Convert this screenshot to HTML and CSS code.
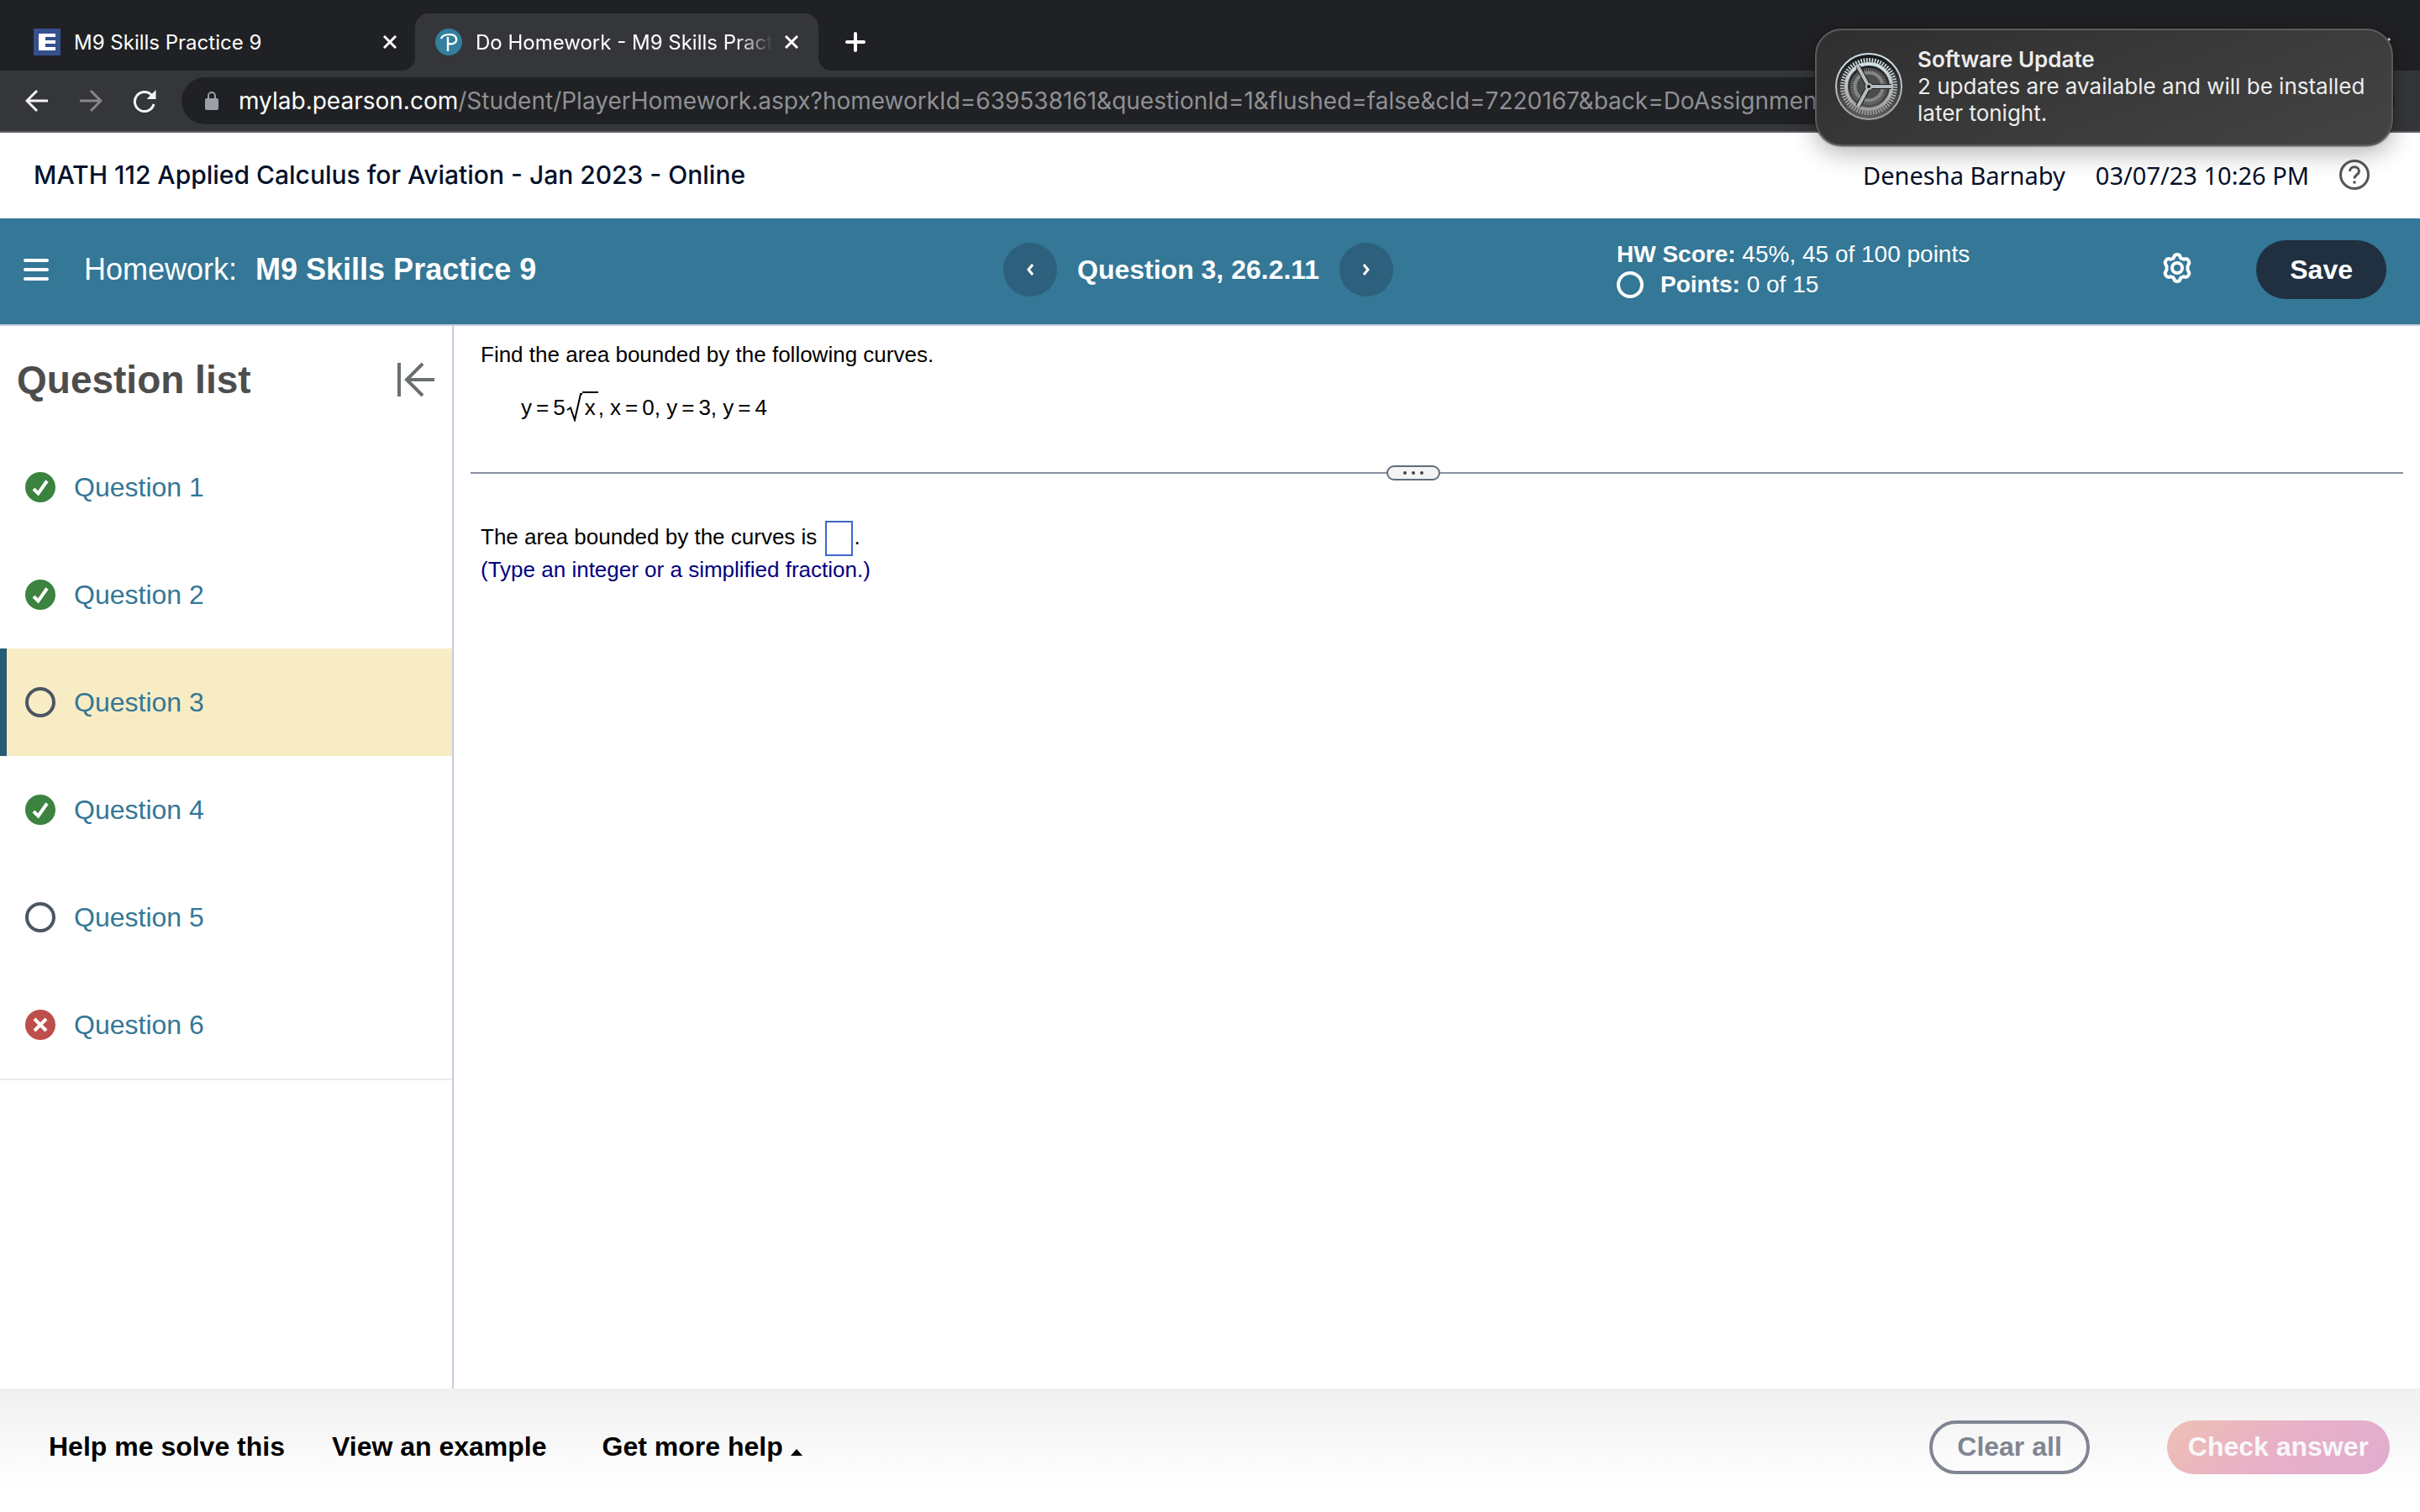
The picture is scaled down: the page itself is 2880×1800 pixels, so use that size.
FILE: index.html
```html
<!DOCTYPE html>
<html lang="en">
<head>
  <meta charset="UTF-8" />
  <title>Do Homework - M9 Skills Practice 9</title>
  <link rel="stylesheet" href="styles.css">
</head>
<body>

  <!-- browser -->
  <div class="tabs">
    <div class="tab">
      <svg class="favicon" viewBox="0 0 32 32"><rect width="32" height="32" fill="#364f8e"/><path d="M6 6h20v4H14v4h12v4H14v4h12v4H6z" fill="#fff"/></svg>
      <span class="tab-title">M9 Skills Practice 9</span>
      <button class="tab-close" aria-label="Close tab"><svg width="16" height="16" viewBox="0 0 16 16"><path d="M1 1l14 14M15 1L1 15"/></svg></button>
    </div>
    <div class="tab active">
      <svg class="favicon" viewBox="0 0 32 32"><circle cx="16" cy="16" r="16" fill="#347e9e"/><path d="M7 12c2-6 17-7 18 0 1 5-4 7-9 6M15 10v17" fill="none" stroke="#fff" stroke-width="2.4"/></svg>
      <span class="tab-title fade">Do Homework - M9 Skills Practice 9</span>
      <button class="tab-close" aria-label="Close tab"><svg width="16" height="16" viewBox="0 0 16 16"><path d="M1 1l14 14M15 1L1 15"/></svg></button>
    </div>
    <button class="new-tab" aria-label="New tab"><svg width="24" height="24" viewBox="0 0 24 24"><path d="M12 2v20M2 12h20"/></svg></button>
    <button class="tab-search" aria-label="Search tabs"><svg width="24" height="16" viewBox="0 0 24 16"><path d="M2 2l10 10L22 2"/></svg></button>
  </div>

  <div class="toolbar">
    <button class="nav" aria-label="Back"><svg width="28" height="28" viewBox="0 0 28 28"><path d="M27 14H3M14 2L2 14l12 12"/></svg></button>
    <button class="nav off" aria-label="Forward"><svg width="28" height="28" viewBox="0 0 28 28"><path d="M1 14h24M14 2l12 12-12 12"/></svg></button>
    <button class="nav" aria-label="Reload"><svg width="28" height="28" viewBox="0 0 28 28"><path d="M23 8A11.500 11.500 0 1 0 25 18"/><path d="M27.500 1v11h-11z" fill="#f1f3f4" stroke="none"/></svg></button>
    <div class="url">
      <svg width="16" height="22" viewBox="0 0 16 22"><rect y="8" width="16" height="14" rx="2" fill="#9aa0a6"/><path d="M4 9V5a4 4 0 0 1 8 0v4" fill="none" stroke="#9aa0a6" stroke-width="2"/></svg>
      <label for="address">mylab.pearson.com</label>
      <input id="address" type="text" value="/Student/PlayerHomework.aspx?homeworkId=639538161&amp;questionId=1&amp;flushed=false&amp;cId=7220167&amp;back=DoAssignment">
    </div>
  </div>

  <div class="notification">
    <svg class="gear" viewBox="0 0 80 80">
      <defs>
        <linearGradient id="metal" x1="0" y1="0" x2="0" y2="1"><stop offset="0" stop-color="#d5e2e8"/><stop offset="1" stop-color="#a09e9c"/></linearGradient>
        <linearGradient id="well" x1="0" y1="0" x2="0" y2="1"><stop offset="0" stop-color="#141718"/><stop offset="1" stop-color="#5e5c5a"/></linearGradient>
      </defs>
      <circle cx="40" cy="40" r="39" fill="url(#well)" stroke="url(#metal)" stroke-width="2"/>
      <circle cx="40" cy="40" r="20" fill="none" stroke="#777" stroke-width="4" stroke-dasharray="1.300 1.213"/>
      <circle cx="40" cy="40" r="16.500" fill="#4c4c4c" stroke="#858585" stroke-width="4"/>
      <circle cx="40" cy="40" r="31.500" fill="none" stroke="url(#metal)" stroke-width="5" stroke-dasharray="1.700 1.599"/>
      <circle cx="40" cy="40" r="27" fill="none" stroke="url(#metal)" stroke-width="4"/>
      <path d="M40 40h27M40 40L27 16M40 40L27 64" fill="none" stroke="#1c1e1f" stroke-width="6"/>
      <path d="M40 40h27M40 40L27 16M40 40L27 64" fill="none" stroke="#b5bcbf" stroke-width="4"/>
      <circle cx="40" cy="40" r="4" fill="#b5bcbf"/>
      <circle cx="40" cy="40" r="2" fill="#111"/>
    </svg>
    <div>
      <strong>Software Update</strong>
      <p>2 updates are available and will be installed later tonight.</p>
    </div>
  </div>

  <!-- course header -->
  <header class="course">
    <div class="course-name">MATH 112 Applied Calculus for Aviation - Jan 2023 - Online</div>
    <div class="user">
      <span>Denesha Barnaby</span>
      <span>03/07/23 10:26 PM</span>
      <button class="help" aria-label="Help"><svg width="36" height="36" viewBox="0 0 36 36"><circle cx="18" cy="18" r="16.500"/><path d="M12.500 14c0-7 11-7 11 0 0 4-5.500 4-5.500 8.500"/><circle cx="18" cy="27" r="1.800" fill="#555" stroke="none"/></svg></button>
    </div>
  </header>

  <div class="bar">
    <div class="bar-left">
      <button class="menu" aria-label="Menu"><svg width="30" height="28" viewBox="0 0 30 28"><path d="M2 3h26M2 14h26M2 25h26"/></svg></button>
      <h1>Homework: <b>M9 Skills Practice 9</b></h1>
    </div>
    <div class="bar-mid">
      <button class="round" aria-label="Previous question"><svg width="10" height="16" viewBox="0 0 10 16"><path d="M8 2L3 8l5 6"/></svg></button>
      <b>Question 3, 26.2.11</b>
      <button class="round" aria-label="Next question"><svg width="10" height="16" viewBox="0 0 10 16"><path d="M2 2l5 6-5 6"/></svg></button>
    </div>
    <div class="bar-right">
      <div class="score">
        <div><b>HW Score:</b> 45%, 45 of 100 points</div>
        <div class="points"><svg width="32" height="32" viewBox="0 0 32 32"><circle cx="16" cy="16" r="14"/></svg><span><b>Points:</b> 0 of 15</span></div>
      </div>
      <button class="settings" aria-label="Settings"><svg width="36" height="36" viewBox="0 0 36 36"><path d="M14.500 4.500Q15 2 18 2t3.500 2.500l1 2 3 1.200 2-.5q2.500-.5 4 2t.2 4.300L30.500 16v4l1.200 2.500q1.300 1.800-.2 4.300t-4 2l-2-.5-3 1.200-1 2Q21 34 18 34t-3.500-2.500l-1-2-3-1.200-2 .5q-2.500.5-4-2t-.2-4.300L5.500 20v-4l-1.200-2.500q-1.300-1.800.2-4.300t4-2l2 .5 3-1.200z"/><circle cx="18" cy="18" r="6"/></svg></button>
      <button class="save">Save</button>
    </div>
  </div>

  <!-- main -->
  <div class="page">
    <aside class="sidebar">
      <div class="sidebar-head">
        <h2>Question list</h2>
        <button aria-label="Collapse list"><svg width="46" height="42" viewBox="0 0 46 42"><path d="M3 1v40M45 21H12M31 2L12 21l19 19"/></svg></button>
      </div>
      <ul class="questions">
        <li><svg viewBox="0 0 36 36"><circle cx="18" cy="18" r="18" fill="#3b833f"/><path d="M10 20l5.500 5.500L26 10.500" class="mark"/></svg><a href="#">Question 1</a></li>
        <li><svg viewBox="0 0 36 36"><circle cx="18" cy="18" r="18" fill="#3b833f"/><path d="M10 20l5.500 5.500L26 10.500" class="mark"/></svg><a href="#">Question 2</a></li>
        <li class="current"><svg viewBox="0 0 36 36"><circle cx="18" cy="18" r="16" class="ring"/></svg><a href="#">Question 3</a></li>
        <li><svg viewBox="0 0 36 36"><circle cx="18" cy="18" r="18" fill="#3b833f"/><path d="M10 20l5.500 5.500L26 10.500" class="mark"/></svg><a href="#">Question 4</a></li>
        <li><svg viewBox="0 0 36 36"><circle cx="18" cy="18" r="16" class="ring"/></svg><a href="#">Question 5</a></li>
        <li><svg viewBox="0 0 36 36"><circle cx="18" cy="18" r="18" fill="#bd4f4b"/><path d="M11 11l14 14M25 11L11 25" class="mark"/></svg><a href="#">Question 6</a></li>
      </ul>
    </aside>

    <main class="work">
      <p>Find the area bounded by the following curves.</p>
      <p class="equation">y<i>=</i>5<svg class="radical" width="20" height="34" viewBox="0 0 20 34"><path d="M2 20l4-2.500L11 32l7-31h2" fill="none" stroke="#000" stroke-width="2"/></svg><span class="root">x</span>, x<i>=</i>0, y<i>=</i>3, y<i>=</i>4</p>
      <div class="divider"><button aria-label="Resize"><span></span><span></span><span></span></button></div>
      <p class="answer"><label for="area">The area bounded by the curves is</label> <input id="area" type="text">.</p>
      <p class="hint">(Type an integer or a simplified fraction.)</p>
    </main>
  </div>

  <footer class="footer">
    <button class="link">Help me solve this</button>
    <button class="link">View an example</button>
    <button class="link more">Get more help <svg width="14" height="8" viewBox="0 0 14 8"><path d="M7 0l7 8H0z"/></svg></button>
    <button class="clear">Clear all</button>
    <button class="check">Check answer</button>
  </footer>

</body>
</html>
```
FILE: styles.css
```css
* {
  box-sizing: border-box;
}

body {
  margin: 0;
  min-height: 100vh;
  display: flex;
  flex-direction: column;
  background: #fff;
  color: #000;
  font-family: "Liberation Sans", Arial, sans-serif;
  font-size: 26px;
}

button, input {
  font: inherit;
  color: inherit;
  background: none;
  border: 0;
  padding: 0;
}

button svg {
  display: block;
  fill: none;
}

h1, h2, p, ul {
  margin: 0;
  padding: 0;
}

/* browser */
.tabs {
  display: flex;
  align-items: flex-end;
  height: 84px;
  background: #202124;
  color: #fff;
  font-family: Inter, sans-serif;
  font-size: 24px;
}

.tab {
  display: flex;
  align-items: center;
  width: 480px;
  height: 68px;
  padding: 0 24px;
}

.tab:first-child {
  width: 494px;
  padding: 0 22px 0 40px;
}

.tab.active {
  position: relative;
  background: #35363a;
  border-radius: 16px 16px 0 0;
}

/* curved feet of the open tab */
.tab.active::before,
.tab.active::after {
  content: "";
  position: absolute;
  bottom: 0;
  width: 16px;
  height: 16px;
}

.tab.active::before {
  right: 100%;
  background: radial-gradient(circle at 0 0, #202124 16px, #35363a 16px);
}

.tab.active::after {
  left: 100%;
  background: radial-gradient(circle at 100% 0, #202124 16px, #35363a 16px);
}

.favicon {
  flex: none;
  width: 32px;
  height: 32px;
  margin-right: 16px;
}

.tab-title {
  flex: 1;
  overflow: hidden;
  white-space: nowrap;
}

.fade {
  mask-image: linear-gradient(to right, #000 88%, transparent);
}

.tab-close {
  margin-left: 14px;
}

.tab-close svg {
  stroke: #fff;
  stroke-width: 3;
}

.new-tab {
  margin: 0 auto 22px 32px;
}

.new-tab svg {
  stroke: #fff;
  stroke-width: 4;
  stroke-linecap: round;
}

.tab-search {
  margin: 0 34px 24px 0;
}

.tab-search svg {
  stroke: #fff;
  stroke-width: 3;
}

.toolbar {
  display: flex;
  align-items: center;
  gap: 36px;
  height: 74px;
  padding: 0 30px;
  background: #35363a;
  border-bottom: 2px solid #5f6064;
}

.nav svg {
  stroke: #f1f3f4;
  stroke-width: 3;
}

.nav.off svg {
  stroke: #86878a;
}

.url {
  flex: 1;
  display: flex;
  align-items: center;
  height: 56px;
  margin-left: -6px;
  padding: 0 28px;
  border-radius: 28px;
  background: #202124;
  color: #fff;
  font-family: Inter, sans-serif;
  font-size: 28px;
}

.url label {
  margin-left: 24px;
}

.url input {
  flex: 1;
  color: #8f9093;
}

.notification {
  position: absolute;
  top: 34px;
  right: 32px;
  display: flex;
  align-items: center;
  gap: 18px;
  width: 688px;
  height: 140px;
  padding: 0 22px 2px;
  border: 2px solid #5c5c5c;
  border-radius: 32px;
  background: linear-gradient(160deg, #2f2f2f, #444);
  box-shadow: 0 0 2px #000, 0 8px 30px rgba(0, 0, 0, 0.3);
  color: #ececec;
  font-family: Inter, sans-serif;
  font-size: 26px;
  line-height: 32px;
}

.notification strong {
  font-weight: 600;
}

.gear {
  flex: none;
  width: 80px;
  height: 80px;
}

/* course header */
.course {
  display: flex;
  justify-content: space-between;
  align-items: center;
  height: 102px;
  padding: 0 60px 2px 40px;
  color: #05112a;
}

.course-name {
  font-family: Inter, sans-serif;
  font-size: 30px;
  font-weight: 500;
}

.user {
  display: flex;
  align-items: center;
  gap: 36px;
  font-family: "Noto Sans", sans-serif;
  font-size: 29px;
}

.help svg {
  stroke: #555;
  stroke-width: 3;
}

/* homework bar */
.bar {
  display: grid;
  grid-template-columns: 1194fr 730fr 956fr;
  align-items: center;
  height: 128px;
  padding-bottom: 4px;
  background: #347796;
  border-bottom: 2px solid #c7cbdc;
  color: #fff;
  font-size: 32px;
}

.bar-left {
  display: flex;
  align-items: center;
  gap: 42px;
  padding-left: 28px;
}

.bar-left h1 {
  font-size: 36px;
  font-weight: normal;
}

.bar-left b {
  margin-left: 12px;
}

.menu svg {
  stroke: #fff;
  stroke-width: 4;
  stroke-linecap: round;
}

.bar-mid {
  display: flex;
  align-items: center;
  gap: 24px;
}

.round {
  display: flex;
  align-items: center;
  justify-content: center;
  width: 64px;
  height: 64px;
  border-radius: 50%;
  background: #2d607c;
}

.round svg {
  stroke: #fff;
  stroke-width: 3;
}

.bar-right {
  display: flex;
  align-items: center;
  padding-right: 40px;
}

.score {
  font-size: 28px;
  line-height: 36px;
}

.points {
  display: flex;
  align-items: center;
  gap: 20px;
}

.points svg {
  fill: none;
  stroke: #fff;
  stroke-width: 4;
}

.settings {
  margin: 0 76px 4px auto;
}

.settings svg {
  stroke: #fff;
  stroke-width: 4;
}

.save {
  height: 70px;
  padding: 0 40px;
  border-radius: 35px;
  background: #203040;
  font-weight: bold;
}

/* main */
.page {
  flex: 1;
  display: flex;
}

.sidebar {
  width: 540px;
  border-right: 2px solid #c7cbdc;
}

.sidebar-head {
  display: flex;
  align-items: center;
  justify-content: space-between;
  height: 128px;
  padding: 0 20px;
}

.sidebar-head h2 {
  color: #4d4d4d;
  font-size: 46px;
}

.sidebar-head svg {
  stroke: #6a7070;
  stroke-width: 4;
}

.questions {
  list-style: none;
  border-bottom: 2px solid #ebebeb;
}

.questions li {
  display: flex;
  align-items: center;
  gap: 22px;
  height: 128px;
  padding-left: 22px;
  border-left: 8px solid transparent;
  font-size: 32px;
}

.questions .current {
  background: #f8ecc4;
  border-left-color: #265c74;
}

.questions a {
  color: #347796;
  text-decoration: none;
}

.questions svg {
  width: 36px;
  height: 36px;
}

.mark {
  fill: none;
  stroke: #fff;
  stroke-width: 4;
}

.ring {
  fill: none;
  stroke: #4b5563;
  stroke-width: 4;
}

.work {
  flex: 1;
  padding: 18px 20px;
}

.work p {
  padding-left: 12px;
  line-height: 32px;
}

.work .equation {
  padding: 28px 0 0 60px;
}

.equation i {
  margin: 0 5px;
  font-style: normal;
}

.radical {
  vertical-align: -8px;
}

.root {
  display: inline-block;
  height: 34px;
  padding: 0 3px;
  border-top: 2px solid #000;
  line-height: 34px;
}

.divider {
  display: flex;
  align-items: center;
  justify-content: center;
  height: 18px;
  margin: 52px 0 48px;
}

.divider::before,
.divider::after {
  content: "";
  flex: 1;
  height: 2px;
  background: #8a90a2;
}

.divider::before {
  flex: 1090;
}

.divider::after {
  flex: 1146;
}

.divider button {
  display: flex;
  align-items: center;
  justify-content: center;
  gap: 6px;
  width: 64px;
  height: 18px;
  border: 2px solid #5f6d7b;
  border-radius: 9px;
  background: #f2f4f6;
}

.divider span {
  width: 4px;
  height: 4px;
  border-radius: 50%;
  background: #444;
}

.answer input {
  width: 33px;
  height: 42px;
  margin: 0 2px;
  border: 2px solid #3f66cc;
  vertical-align: middle;
}

.hint {
  color: #000080;
}

/* footer */
.footer {
  display: flex;
  align-items: center;
  height: 147px;
  padding: 0 36px 8px 58px;
  background: linear-gradient(#f0f0f0, #fff 80%);
  font-size: 32px;
  font-weight: bold;
}

.link {
  margin-right: 56px;
}

.more {
  margin-left: 10px;
}

.more svg {
  display: inline;
  fill: #000;
}

.clear {
  height: 64px;
  margin: 0 92px 0 auto;
  padding: 0 29px;
  border: 4px solid #808592;
  border-radius: 32px;
  color: #808592;
}

.check {
  height: 64px;
  padding: 0 25px;
  border-radius: 32px;
  background: linear-gradient(135deg, #eec0b2, #e8b0c8 50%, #e0adcf);
  color: #f8f8fa;
}
```
